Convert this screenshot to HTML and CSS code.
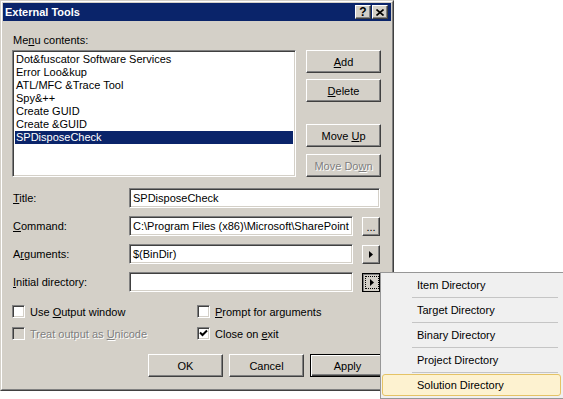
FILE: index.html
```html
<!DOCTYPE html>
<html>
<head>
  <title>External Tools</title>
  <link rel="stylesheet" href="styles.css">
</head>
<body>
  <div class="dialog">
    <div class="frame">
      <div class="titlebar">
        <span class="title">External Tools</span>
        <div class="caption-btns">
          <span class="cap-btn help">?</span>
          <span class="cap-btn">
            <svg width="8" height="7" viewBox="0 0 8 7"><path d="M0.5 0.5 L7.5 6.5 M7.5 0.5 L0.5 6.5" stroke="#000" stroke-width="1.6"/></svg>
          </span>
        </div>
      </div>

      <div class="content">
        <div class="label">Me<u>n</u>u contents:</div>
        <div class="top-row">
          <div class="listbox">
            <div class="item">Dot&amp;fuscator Software Services</div>
            <div class="item">Error Loo&amp;kup</div>
            <div class="item">ATL/MFC &amp;Trace Tool</div>
            <div class="item">Spy&amp;++</div>
            <div class="item">Create GUID</div>
            <div class="item">Create &amp;GUID</div>
            <div class="item selected">SPDisposeCheck</div>
          </div>
          <div class="side-btns">
            <button class="btn"><u>A</u>dd</button>
            <button class="btn"><u>D</u>elete</button>
            <button class="btn move-up">Move <u>U</u>p</button>
            <button class="btn disabled">Move Do<u>w</u>n</button>
          </div>
        </div>

        <div class="fields">
          <span class="field-label"><u>T</u>itle:</span>
          <div class="input wide">SPDisposeCheck</div>

          <span class="field-label"><u>C</u>ommand:</span>
          <div class="input">C:\Program Files (x86)\Microsoft\SharePoint I</div>
          <button class="small-btn dots">...</button>

          <span class="field-label">A<u>r</u>guments:</span>
          <div class="input">$(BinDir)</div>
          <button class="small-btn">
            <svg width="4" height="7" viewBox="0 0 4 7"><polygon points="0,0 4,3.5 0,7" fill="#000"/></svg>
          </button>

          <span class="field-label"><u>I</u>nitial directory:</span>
          <div class="input"></div>
          <button class="small-btn pressed">
            <span class="focus">
              <svg width="4" height="7" viewBox="0 0 4 7"><polygon points="0,0 4,3.5 0,7" fill="#000"/></svg>
            </span>
          </button>
        </div>

        <div class="checks">
          <div class="check">
            <span class="box"></span>
            <span>Use <u>O</u>utput window</span>
          </div>
          <div class="check">
            <span class="box"></span>
            <span><u>P</u>rompt for arguments</span>
          </div>
          <div class="check disabled">
            <span class="box"></span>
            <span>Treat output as <u>U</u>nicode</span>
          </div>
          <div class="check">
            <span class="box">
              <svg width="9" height="9" viewBox="0 0 9 9"><polyline points="1,3.5 3.5,6 8,1.5" fill="none" stroke="#000" stroke-width="2"/></svg>
            </span>
            <span>Close on <u>e</u>xit</span>
          </div>
        </div>

        <div class="bottom-btns">
          <button class="btn">OK</button>
          <button class="btn">Cancel</button>
          <button class="btn default">Apply</button>
        </div>
      </div>
    </div>
  </div>

  <div class="popup">
    <div class="menu-item">Item Directory</div>
    <div class="sep"></div>
    <div class="menu-item">Target Directory</div>
    <div class="sep"></div>
    <div class="menu-item">Binary Directory</div>
    <div class="sep"></div>
    <div class="menu-item">Project Directory</div>
    <div class="sep"></div>
    <div class="menu-item hover">Solution Directory</div>
  </div>
</body>
</html>
```

FILE: styles.css
```css
body {
  margin: 0;
  width: 563px;
  height: 399px;
  overflow: hidden;
  position: relative;
  background: #fff;
  font-family: "Liberation Sans", Arial, sans-serif;
  font-size: 11px;
  color: #000;
}
u {
  text-decoration: underline;
  text-underline-offset: 1px;
}
.dialog {
  width: 394px;
  height: 391px;
  box-sizing: border-box;
  border: 1px solid;
  border-color: #d4d0c8 #404040 #404040 #d4d0c8;
  background: #d4d0c8;
}
.frame {
  height: 100%;
  box-sizing: border-box;
  border: 1px solid;
  border-color: #fff #808080 #808080 #fff;
  padding: 1px;
}
.titlebar {
  height: 18px;
  background: #0a246a;
  display: flex;
  align-items: center;
  justify-content: space-between;
  padding: 0 3px 0 2px;
}
.title {
  color: #fff;
  font-weight: bold;
  font-size: 11px;
}
.caption-btns {
  display: flex;
  gap: 1px;
}
.cap-btn {
  width: 16px;
  height: 14px;
  box-sizing: border-box;
  background: #d4d0c8;
  border: 1px solid;
  border-color: #fff #404040 #404040 #fff;
  box-shadow: inset -1px -1px #808080;
  display: flex;
  align-items: center;
  justify-content: center;
}
.cap-btn.help {
  font-weight: bold;
  font-size: 12px;
  line-height: 12px;
}

.content {
  padding: 13px 0 0 9px;
}
.label {
  height: 13px;
  line-height: 13px;
  margin-bottom: 3px;
  padding-left: 1px;
}
.top-row {
  display: flex;
  gap: 10px;
}
.listbox {
  width: 284px;
  height: 127px;
  box-sizing: border-box;
  background: #fff;
  border: 1px solid;
  border-color: #808080 #fff #fff #808080;
  box-shadow: inset 1px 1px #404040, inset -1px -1px #d4d0c8;
  padding: 2px;
}
.item {
  height: 13px;
  line-height: 13px;
  padding-left: 1px;
  white-space: nowrap;
}
.item.selected {
  background: #0a246a;
  color: #fff;
}
.side-btns {
  display: flex;
  flex-direction: column;
  gap: 6px;
}
.btn {
  width: 75px;
  height: 23px;
  box-sizing: border-box;
  font: inherit;
  color: #000;
  background: #d4d0c8;
  border: 1px solid;
  border-color: #fff #404040 #404040 #fff;
  box-shadow: inset -1px -1px #808080, inset 1px 1px #d4d0c8;
  padding: 0;
}
.btn.move-up {
  margin-top: 16px;
}
.btn.disabled {
  margin-top: 1px;
  color: #808080;
  text-shadow: 1px 1px #fff;
}
.btn.default {
  border-color: #000;
  box-shadow: inset 1px 1px #fff, inset -1px -1px #404040, inset -2px -2px #808080;
}

.fields {
  margin-top: 11px;
  display: grid;
  grid-template-columns: 108px 224px 18px;
  column-gap: 9px;
  row-gap: 8px;
  align-items: center;
}
.field-label {
  padding-left: 1px;
  white-space: nowrap;
}
.input {
  height: 20px;
  box-sizing: border-box;
  background: #fff;
  border: 1px solid;
  border-color: #808080 #fff #fff #808080;
  box-shadow: inset 1px 1px #404040, inset -1px -1px #d4d0c8;
  padding: 0 3px;
  line-height: 18px;
  white-space: nowrap;
  overflow: hidden;
}
.input.wide {
  grid-column: 2 / 4;
}
.small-btn {
  width: 18px;
  height: 19px;
  box-sizing: border-box;
  font: inherit;
  background: #d4d0c8;
  border: 1px solid;
  border-color: #fff #404040 #404040 #fff;
  box-shadow: inset -1px -1px #808080, inset 1px 1px #d4d0c8;
  padding: 0;
  display: flex;
  align-items: center;
  justify-content: center;
}
.small-btn.dots {
  line-height: 10px;
  align-items: flex-end;
  padding-bottom: 3px;
}
.small-btn.pressed {
  border-color: #000;
  box-shadow: inset 1px 1px #808080;
  padding: 1px 0 0 1px;
}
.focus {
  width: 12px;
  height: 11px;
  border: 1px dotted #000;
  display: flex;
  align-items: center;
  justify-content: center;
}

.checks {
  margin-top: 13px;
  display: grid;
  grid-template-columns: 185px auto;
  row-gap: 9px;
}
.check {
  display: flex;
  align-items: center;
  gap: 5px;
  height: 13px;
}
.box {
  width: 13px;
  height: 13px;
  box-sizing: border-box;
  background: #fff;
  border: 1px solid;
  border-color: #808080 #fff #fff #808080;
  box-shadow: inset 1px 1px #404040, inset -1px -1px #d4d0c8;
  display: flex;
  align-items: center;
  justify-content: center;
}
.check.disabled {
  color: #808080;
  text-shadow: 1px 1px #fff;
}
.check.disabled .box {
  background: #d4d0c8;
}

.bottom-btns {
  margin: 14px 0 0 136px;
  display: flex;
  gap: 6px;
}

.popup {
  position: absolute;
  left: 380px;
  top: 272px;
  width: 190px;
  height: 127px;
  box-sizing: border-box;
  background: #f0f0f0;
  border: 1px solid #979797;
  padding-bottom: 1px;
}
.menu-item {
  height: 24px;
  line-height: 24px;
  padding-left: 36px;
  white-space: nowrap;
}
.menu-item.hover {
  height: 22px;
  line-height: 20px;
  margin: 1px 8px 0 1px;
  padding-left: 34px;
  background: #fdf2d0;
  border: 1px solid #e5c365;
  border-radius: 3px;
  box-sizing: border-box;
}
.sep {
  height: 1px;
  margin: 0 11px 0 31px;
  background: #c5c5c5;
}
```
